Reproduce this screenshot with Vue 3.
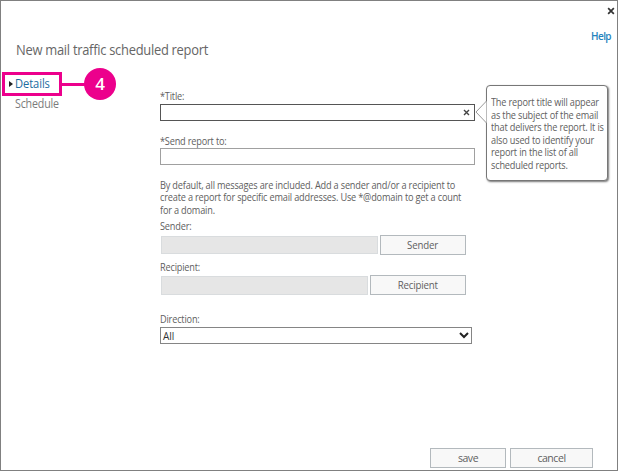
<script setup>
import { ref } from 'vue'

const title = ref('')
const recipients = ref('')
const intro = [
  'By default, all messages are included. Add a sender and/or a recipient to',
  'create a report for specific email addresses. Use *@domain to get a count',
  'for a domain.',
]
const tip = [
  'The report title will appear',
  'as the subject of the email',
  'that delivers the report. It is',
  'also used to identify your',
  'report in the list of all',
  'scheduled reports.',
]
</script>

<template>
  <main class="dialog">
    <header class="top">
      <svg class="close" viewBox="0 0 7 7"><path d="M1 1 6 6M6 1 1 6" /></svg>
      <a class="help">Help</a>
    </header>
    <h1>New mail traffic scheduled report</h1>
    <div class="body">
      <nav>
        <a class="active"><svg viewBox="0 0 4 6"><path d="M0 0 4 3 0 6Z" /></svg><span>Details</span></a>
        <a class="step">Schedule</a>
        <div class="callout"><i></i><b>4</b></div>
      </nav>
      <form @submit.prevent>
        <label class="l-title">*Title:</label>
        <div class="field focus">
          <input v-model="title" />
          <svg viewBox="0 0 7 7"><path d="M1 1 6 6M6 1 1 6" /></svg>
        </div>
        <label class="l-send">*Send report to:</label>
        <div class="field"><input v-model="recipients" /></div>
        <div class="intro"><p v-for="line in intro" :key="line">{{ line }}</p></div>
        <label class="l-sender">Sender:</label>
        <div class="pick sender"><i></i><button><span>Sender</span></button></div>
        <label class="l-recipient">Recipient:</label>
        <div class="pick recipient"><i></i><button><span>Recipient</span></button></div>
        <label class="l-direction">Direction:</label>
        <div class="select">
          <span>All</span>
          <svg viewBox="0 0 10 7"><path d="M1 1 5 5 9 1" /></svg>
        </div>
      </form>
    </div>
    <aside class="tip">
      <svg viewBox="0 0 12 22"><path d="M11.5 0 1 11 11.5 22" /></svg>
      <p v-for="line in tip" :key="line">{{ line }}</p>
    </aside>
    <footer>
      <button class="save">save</button>
      <button class="cancel">cancel</button>
    </footer>
  </main>
</template>

<style>
body { margin: 0; background: #fff; }
</style>

<style scoped>
* { box-sizing: border-box; }
.dialog {
  position: relative;
  display: flex;
  flex-direction: column;
  width: 618px;
  height: 471px;
  border: 1px solid #808080;
  background: #fff;
  color: #606060;
  font: 10px/12px "Open Sans", "Noto Sans", sans-serif;
  overflow: hidden;
}
.top {
  display: flex;
  flex-direction: column;
  align-items: flex-end;
  flex: none;
  height: 41px;
  padding: 6px 2px 0 0;
}
.close { flex: none; width: 8px; height: 8px; fill: none; stroke: #333; stroke-width: 1.5; }
.help {
  flex: none;
  margin: 15px 4px 0 0;
  color: #2583bd;
  font-size: 10px;
  line-height: 12px;
  font-weight: 600;
  letter-spacing: -0.6px;
}
h1 {
  align-self: flex-start;
  margin: 0 0 0 14.5px;
  font-size: 14px;
  line-height: 16px;
  font-weight: 400;
  letter-spacing: -0.3px;
  white-space: nowrap;
  color: #666;
  transform: scaleX(0.923);
  transform-origin: left;
}
.body { display: flex; margin-top: 14px; }
nav { position: relative; width: 159px; flex: none; }
nav a { display: flex; align-items: center; font-size: 12px; }
nav .active {
  width: 60px;
  height: 24px;
  margin-left: 1px;
  border: 3px solid #ec008c;
  padding-left: 4px;
  color: #1b6c9f;
}
nav .active svg { width: 4px; height: 6px; margin-right: 2px; fill: #222; flex: none; }
nav .active span { letter-spacing: -0.1px; transform: scaleX(0.93); transform-origin: left; }
nav .step {
  width: 60px;
  height: 15px;
  margin-left: 14px;
  color: #7b7b7b;
  letter-spacing: -0.2px;
  transform: scaleX(0.89);
  transform-origin: left;
}
.callout { position: absolute; left: 61px; top: -4px; display: flex; align-items: center; }
.callout i { width: 23px; height: 3px; background: #ec008c; }
.callout b {
  width: 32px;
  height: 32px;
  margin-left: -1px;
  border-radius: 50%;
  background: #ec008c;
  color: #fff;
  font: 600 17px/32px "Open Sans", sans-serif;
  text-align: center;
}
form { display: flex; flex-direction: column; width: 315px; padding-top: 17px; }
label, p {
  white-space: nowrap;
  letter-spacing: -0.2px;
  transform: scaleX(0.917);
  transform-origin: left;
}
label { height: 14px; line-height: 14px; }
p { margin: 0; }
.field {
  display: flex;
  align-items: center;
  height: 17px;
  border: 1px solid #a0a0a0;
  padding-right: 4px;
}
.field.focus { margin-top: 1px; border-color: #555; }
.field input { flex: 1; min-width: 0; height: 14px; padding: 0 3px; border: 0; outline: 0; background: transparent; }
.field svg { width: 7px; height: 7px; fill: none; stroke: #444; stroke-width: 1.4; }
.l-send { margin-top: 13px; }
.intro { margin-top: 14px; height: 37px; }
.intro p { line-height: 12.3px; }
.l-sender { margin-top: 3px; }
.pick { display: flex; align-items: center; justify-content: space-between; width: 306px; height: 20px; margin-top: 2px; padding-left: 1px; }
.pick i { height: 18px; border: 1px solid #d9dcde; background: #e6e6e6; }
.pick.recipient { margin-top: 1px; }
.sender i { width: 217px; }
.recipient i { width: 207px; height: 19px; }
button {
  height: 20px;
  padding: 0;
  border: 1px solid #b3b9bd;
  background: #f8f8f8;
  color: #606060;
  font: 11px/16px "Open Sans", "Noto Sans", sans-serif;
  letter-spacing: -0.2px;
}
button span { display: inline-block; transform: scaleX(0.88); }
.sender button { width: 86px; }
.recipient button { width: 96px; }
.l-recipient { margin-top: 5px; }
.l-direction { margin-top: 17px; }
.select {
  display: flex;
  align-items: center;
  justify-content: space-between;
  width: 312px;
  height: 17px;
  margin-top: 1px;
  padding: 0 2px;
  border: 1px solid #858585;
  color: #333;
  font-size: 10px;
}
.select svg { width: 10px; height: 7px; fill: none; stroke: #222; stroke-width: 2; }
.tip {
  position: absolute;
  left: 485px;
  top: 84px;
  width: 122px;
  height: 96px;
  padding: 10px 0 0 4px;
  border: 1px solid #777;
  border-radius: 4px;
  background: #fff;
  box-shadow: 1px 1px 2px #777;
}
.tip p { line-height: 12.5px; }
.tip svg { position: absolute; left: -12px; top: 15px; width: 12px; height: 22px; fill: #fff; stroke: #999; stroke-width: 1; }
footer { display: flex; gap: 4px; margin: auto 24px 2px auto; }
.save { width: 76px; }
.cancel { width: 83px; }
footer button { font-size: 10.5px; letter-spacing: -0.45px; }
</style>
